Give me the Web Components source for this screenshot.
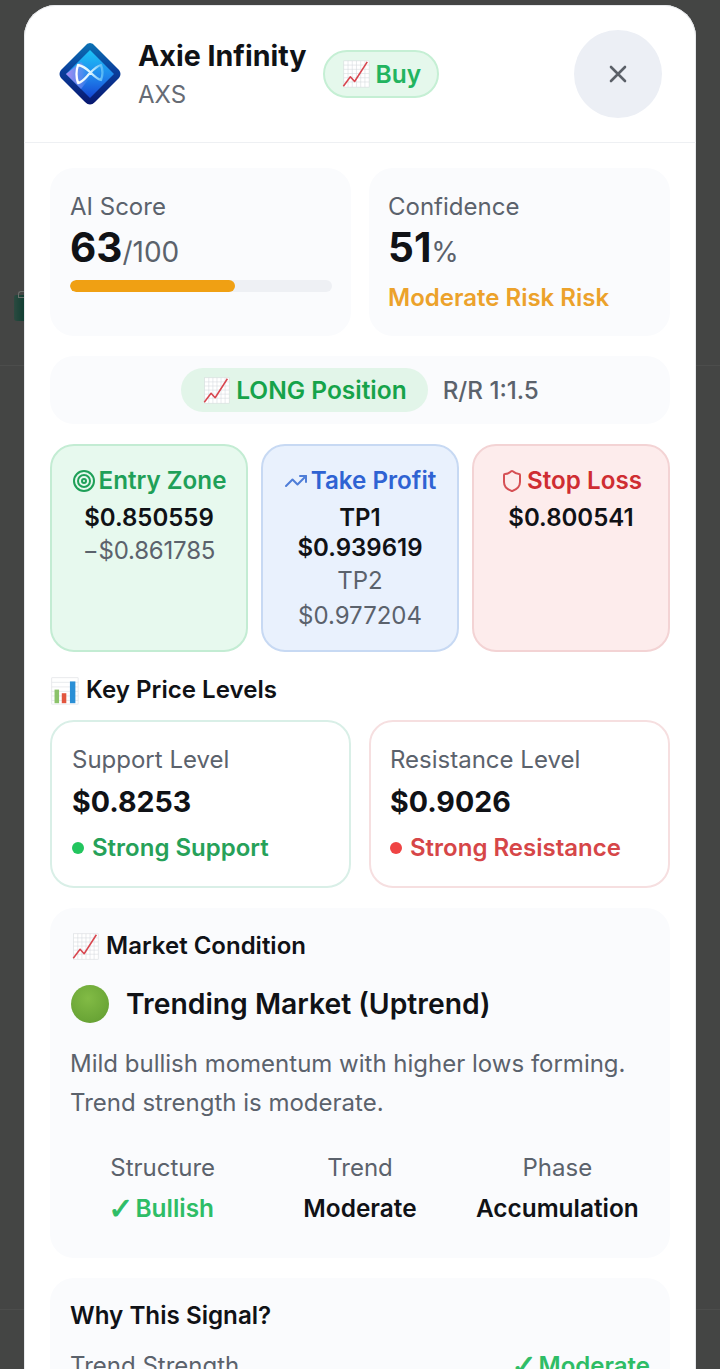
<!DOCTYPE html>
<html><head><meta charset="utf-8">
<style>
html,body{margin:0;padding:0;height:1369px;overflow:hidden;background:#444544}
body{font-family:Inter,"Liberation Sans",sans-serif;color:#111318;position:relative}
signal-modal{position:absolute;left:24px;top:5px}
</style></head><body>
<app-backdrop></app-backdrop>
<signal-modal>
  <modal-header slot="header" name="Axie Infinity" symbol="AXS" signal="Buy"></modal-header>
  <div class="two">
    <stat-card label="AI Score" value="63" unit="/100" bar="63"></stat-card>
    <stat-card label="Confidence" value="51" unit="%" note="Moderate Risk Risk"></stat-card>
  </div>
  <position-bar pos="LONG Position" rr="R/R 1:1.5"></position-bar>
  <div class="three">
    <trade-card kind="entry" title="Entry Zone"><b>$0.850559</b><span>−$0.861785</span></trade-card>
    <trade-card kind="tp" title="Take Profit"><b>TP1 $0.939619</b><span>TP2</span><span>$0.977204</span></trade-card>
    <trade-card kind="sl" title="Stop Loss"><b>$0.800541</b></trade-card>
  </div>
  <section-title icon="bars">Key Price Levels</section-title>
  <div class="two levels">
    <level-card kind="sup" label="Support Level" value="$0.8253" note="Strong Support"></level-card>
    <level-card kind="res" label="Resistance Level" value="$0.9026" note="Strong Resistance"></level-card>
  </div>
  <market-card></market-card>
  <why-card></why-card>
</signal-modal>

<script>
const CHART = `<svg viewBox="0 0 32 32" width="100%" height="100%" style="display:block"><rect x="3" y="2" width="27" height="28" fill="#fff" stroke="#d5d9dd" stroke-width=".6"/><path d="M3 6.500H30M3 11H30M3 15.500H30M3 20H30M3 24.500H30M7.500 2V30M12 2V30M16.500 2V30M21 2V30M25.500 2V30" stroke="#d5d9dd" stroke-width=".6" fill="none"/><path d="M2.500 29 10 19l4.500 5L28 3" stroke="#d8464f" stroke-width="1.700" fill="none" stroke-linejoin="round"/></svg>`;
const BARS = `<svg viewBox="0 0 32 32" width="100%" height="100%" style="display:block"><rect x="2" y="2" width="29" height="29" fill="#fff" stroke="#d5d9dd" stroke-width=".6"/><path d="M2 7H31M2 12H31M2 17H31M2 22H31M2 27H31" stroke="#dde1e5" stroke-width=".7"/><rect x="5" y="15" width="5" height="15" fill="#8cc36b"/><rect x="13" y="19" width="5" height="11" fill="#e2563f"/><rect x="22" y="6" width="6" height="24" fill="#2a8fd6"/></svg>`;
function def(name, css, html){
  customElements.define(name, class extends HTMLElement{
    connectedCallback(){
      if(this.shadowRoot) return;
      const a = n => this.getAttribute(n) || '';
      const r = this.attachShadow({mode:'open'});
      r.innerHTML = `<style>${css}</style>` + html(a);
    }
  });
}
def('app-backdrop', `:host{position:absolute;inset:0;display:block}
 .l{position:absolute;left:0;right:0;height:1px;background:#4c4d4c}
 .i{position:absolute;left:14px;top:295px;width:10px;height:26px;background:linear-gradient(90deg,#2b4a40,#123f33);border-radius:2px 0 0 3px;filter:blur(.6px)}
 .k{position:absolute;left:18px;top:291px;width:6px;height:5px;border:1px solid #6a6e6c;border-right:0;border-radius:3px 0 0 0}`,
 a=>`<div class="l" style="top:365px"></div><div class="l" style="top:1309px"></div><div class="i"></div><div class="k"></div>`);

def('signal-modal', `:host{display:block;width:672px;height:1420px;background:#fff;border-radius:32px;overflow:hidden;box-shadow:0 0 0 1px #e7e9ec inset}
 .body{padding:25px 26px 0;display:flex;flex-direction:column}
 ::slotted(.two){display:grid;grid-template-columns:1fr 1fr;gap:18px}
 ::slotted(.three){display:grid;grid-template-columns:repeat(3,1fr);gap:13px;margin-top:20px}
 ::slotted(.levels){margin-top:14px}`,
 a=>`<slot name="header"></slot><div class="body"><slot></slot></div>`);

def('modal-header', `:host{display:flex;align-items:center;height:138px;box-sizing:border-box;border-bottom:1px solid #eef0f3;padding:0 34px 0 33px}
 .logo{width:66px;height:66px;flex:none;margin-right:15px}
 .t{display:flex;flex-direction:column;margin-right:16px;padding-top:2px}
 h1{margin:0;font-size:28.600px;line-height:38px;font-weight:700;color:#101216;white-space:nowrap}
 .s{font-size:24px;line-height:34px;color:#666b74;margin-top:3px}
 .b{display:flex;align-items:center;gap:5px;height:48px;padding:0 16px;border-radius:24px;background:#e5f8ec;border:2px solid #c5efd4;color:#22b45f;font-weight:600;font-size:24.500px;box-sizing:border-box}
 .e{width:30px;height:30px}
 .x{margin-left:auto;width:88px;height:88px;border-radius:50%;background:#eceff5;display:flex;align-items:center;justify-content:center}`,
 a=>`<svg class="logo" viewBox="0 0 66 66"><defs>
   <linearGradient id="o" x1="0" y1="0" x2="0" y2="1"><stop offset="0" stop-color="#0b72b4"/><stop offset=".45" stop-color="#0a3f9c"/><stop offset="1" stop-color="#08176f"/></linearGradient>
   <linearGradient id="n" x1="0" y1="0" x2="0" y2="1"><stop offset="0" stop-color="#1cc4f6"/><stop offset=".55" stop-color="#1f86ec"/><stop offset="1" stop-color="#1546d4"/></linearGradient>
   <linearGradient id="p" x1="0" y1="0" x2="1" y2="0"><stop offset="0" stop-color="#b08cf2"/><stop offset=".6" stop-color="#6e8cf2" stop-opacity=".6"/><stop offset="1" stop-color="#1f86ec" stop-opacity="0"/></linearGradient>
   <linearGradient id="w" x1="0" y1="0" x2="1" y2="0"><stop offset="0" stop-color="#fff"/><stop offset=".55" stop-color="#d8f3ff"/><stop offset="1" stop-color="#57b8f5"/></linearGradient></defs>
   <path d="M33 2Q36 2 38 5L62 29Q65 33 62 37L38 61Q33 66 28 61L4 37Q1 33 4 29L28 5Q30 2 33 2Z" fill="url(#o)"/>
   <path d="M33 9 57 33 33 57 9 33Z" fill="url(#n)"/>
   <path d="M9 33 24 21 36 33 24 48Z" fill="url(#p)"/>
   <path d="M21 24c-2 6-2 12 0 18 5-1 8-6 12-10 4-4 7-7 11-8 2 5 2 10 0 15-4-1-7-4-11-8-4-4-7-6-12-7Z" fill="none" stroke="url(#w)" stroke-width="2.300" stroke-linejoin="round"/></svg>
   <div class="t"><h1>${a('name')}</h1><div class="s">${a('symbol')}</div></div>
   <div class="b"><span class="e">${CHART}</span><span>${a('signal')}</span></div>
   <div class="x"><svg width="20" height="20" viewBox="0 0 20 20"><path d="M3 3 17 17M17 3 3 17" stroke="#5b6068" stroke-width="2.600" stroke-linecap="round"/></svg></div>`);

def('stat-card', `:host{display:block;background:#fafbfd;border-radius:24px;height:168px;box-sizing:border-box;padding:23px 19px}
 :host(:first-child){padding-left:20px}
 .l{font-size:24px;line-height:32px;color:#5b626c}
 .v{font-size:40.500px;line-height:48px;font-weight:700;color:#101216;margin-top:1px;white-space:nowrap}
 .u{font-size:28px;font-weight:400;color:#5b626c}
 .track{height:12px;background:#eef0f4;border-radius:6px;margin-top:4px;overflow:hidden}
 .fill{height:100%;background:#f0a013;border-radius:6px}
 .n{font-size:24px;line-height:32px;font-weight:600;color:#eca22b;margin-top:6px;white-space:nowrap}`,
 a=>`<div class="l">${a('label')}</div><div class="v">${a('value')}<span class="u">${a('unit')}</span></div>`+
   (a('bar')?`<div class="track"><div class="fill" style="width:${a('bar')}%"></div></div>`:`<div class="n">${a('note')}</div>`));

def('position-bar', `:host{display:flex;justify-content:center;align-items:center;gap:15px;height:68px;background:#fafbfd;border-radius:24px;margin-top:20px}
 .p{display:flex;align-items:center;gap:5px;height:44px;padding:0 21px;border-radius:22px;background:#e2f5e9;color:#16a34a;font-weight:600;font-size:24.500px}
 .e{width:29px;height:29px}
 .r{font-size:24.200px;font-weight:500;color:#5b626c}`,
 a=>`<div class="p"><span class="e">${CHART}</span>${a('pos')}</div><div class="r">${a('rr')}</div>`);

const ICONS={
 entry:`<svg viewBox="0 0 24 24" width="24" height="24" fill="none" stroke="currentColor" stroke-width="2"><circle cx="12" cy="12" r="10"/><circle cx="12" cy="12" r="6"/><circle cx="12" cy="12" r="2"/></svg>`,
 tp:`<svg viewBox="0 0 24 24" width="24" height="24" fill="none" stroke="currentColor" stroke-width="2" stroke-linecap="round" stroke-linejoin="round"><path d="m22 7-8.500 8.500-5-5L2 17"/><path d="M16 7h6v6"/></svg>`,
 sl:`<svg viewBox="0 0 24 24" width="24" height="24" fill="none" stroke="currentColor" stroke-width="2" stroke-linecap="round" stroke-linejoin="round"><path d="M20 13c0 5-3.500 7.500-7.660 8.950a1 1 0 0 1-.67-.01C7.500 20.500 4 18 4 13V6a1 1 0 0 1 1-1c2 0 4.500-1.200 6.240-2.720a1.170 1.170 0 0 1 1.520 0C14.510 3.810 17 5 19 5a1 1 0 0 1 1 1z"/></svg>`};
def('trade-card', `:host{display:block;height:208px;box-sizing:border-box;border-radius:24px;border:2px solid;padding:17px 12px;text-align:center}
 :host([kind=entry]){background:#e7f9ee;border-color:#c3ecd3;--c:#1fa058}
 :host([kind=tp]){background:#e9f1fd;border-color:#c7d9f3;--c:#2f63d3}
 :host([kind=sl]){background:#fdecec;border-color:#f3d3d4;--c:#cf2d32}
 .h{display:flex;justify-content:center;align-items:center;gap:3px;color:var(--c);font-weight:600;font-size:24.200px;line-height:36px;white-space:nowrap}
 .h svg{flex:none}
 :host([kind=tp]) .h svg{color:#4f7ed8}
 :host([kind=sl]) .h svg{color:#d65055}
 ::slotted(b){display:block;font-size:24px;line-height:30px;font-weight:600;color:#101216}
 ::slotted(span){display:block;font-size:24px;line-height:35px;color:#5b626c}
 :host([kind=entry]) ::slotted(span){letter-spacing:-.2px}
 .c{margin-top:4px}`,
 a=>`<div class="h">${ICONS[a('kind')]}<span>${a('title')}</span></div><div class="c"><slot></slot></div>`);

def('section-title', `:host{display:flex;align-items:center;gap:7px;font-size:24.100px;font-weight:600;color:#101216;line-height:32px;margin-top:22px}
 .e{width:29px;height:29px;flex:none}`,
 a=>`<span class="e">${a('icon')==='bars'?BARS:CHART}</span><slot></slot>`);

def('level-card', `:host{display:block;height:168px;box-sizing:border-box;border-radius:24px;border:2px solid;padding:21px 20px;background:#fff}
 :host(:last-child){padding-left:19px}
 :host([kind=sup]){border-color:#d9efe7;--c:#26a159;--d:#22c55e}
 :host([kind=res]){border-color:#f6dfe0;--c:#d64648;--d:#ef4444}
 .l{font-size:24px;line-height:34px;color:#5b626c}
 .v{font-size:28.600px;line-height:42px;font-weight:700;color:#101216;margin-top:4px}
 .n{display:flex;align-items:center;gap:8px;font-size:24px;line-height:32px;font-weight:600;color:var(--c);margin-top:9px}
 .d{width:12px;height:12px;border-radius:50%;background:var(--d)}`,
 a=>`<div class="l">${a('label')}</div><div class="v">${a('value')}</div><div class="n"><span class="d"></span>${a('note')}</div>`);

const CHECK=`.c{font-family:"DejaVu Sans",sans-serif;font-size:30px;font-weight:700;line-height:32px;vertical-align:-2px;display:inline-block;margin:0 2px 0 -3px;-webkit-text-stroke:.9px currentColor}`;
def('market-card', `:host{display:block;height:350px;box-sizing:border-box;margin-top:20px;background:#fafbfd;border-radius:24px;padding:21px 20px}
 .h{display:flex;align-items:center;gap:6px;font-size:24px;font-weight:600;line-height:34px;color:#101216}
 .e{width:29px;height:29px;flex:none;margin-left:1px}
 .t{display:flex;align-items:center;gap:17px;font-size:28.300px;font-weight:600;line-height:40px;color:#101216;margin-top:21px}
 .dot{width:38px;height:38px;border-radius:50%;margin-left:1px;background:radial-gradient(circle at 45% 35%,#82bb45,#6aa536 70%,#5d9430);flex:none}
 p{margin:20px 0 0;font-size:24px;line-height:39px;color:#5b626c}
 .g{display:grid;grid-template-columns:repeat(3,1fr);gap:12px;margin-top:30px;text-align:center}
 .g>div>div:first-child{font-size:24px;line-height:32px;color:#5b626c}
 .g>div>div:last-child{font-size:24.400px;line-height:32px;font-weight:600;color:#101216;margin-top:8px;white-space:nowrap}
 .g>div>div.ok{color:#2ebd66}
 ${CHECK}`,
 a=>`<div class="h"><span class="e">${CHART}</span>Market Condition</div>
   <div class="t"><span class="dot"></span>Trending Market (Uptrend)</div>
   <p>Mild bullish momentum with higher lows forming.<br>Trend strength is moderate.</p>
   <div class="g"><div><div>Structure</div><div class="ok"><span class="c">✓</span>Bullish</div></div><div><div>Trend</div><div>Moderate</div></div><div><div>Phase</div><div>Accumulation</div></div></div>`);

def('why-card', `:host{display:block;margin-top:20px;background:#fafbfd;border-radius:24px;padding:22px 20px;height:300px;box-sizing:border-box}
 h3{margin:0;font-size:24.200px;font-weight:600;line-height:32px;color:#101216}
 .r{display:flex;justify-content:space-between;font-size:24px;line-height:32px;color:#5b626c;margin-top:18px}
 .ok{color:#2ebd66;font-weight:600}
 ${CHECK}`,
 a=>`<h3>Why This Signal?</h3><div class="r"><span>Trend Strength</span><span class="ok"><span class="c">✓</span>Moderate</span></div>`);
</script>
</body></html>
